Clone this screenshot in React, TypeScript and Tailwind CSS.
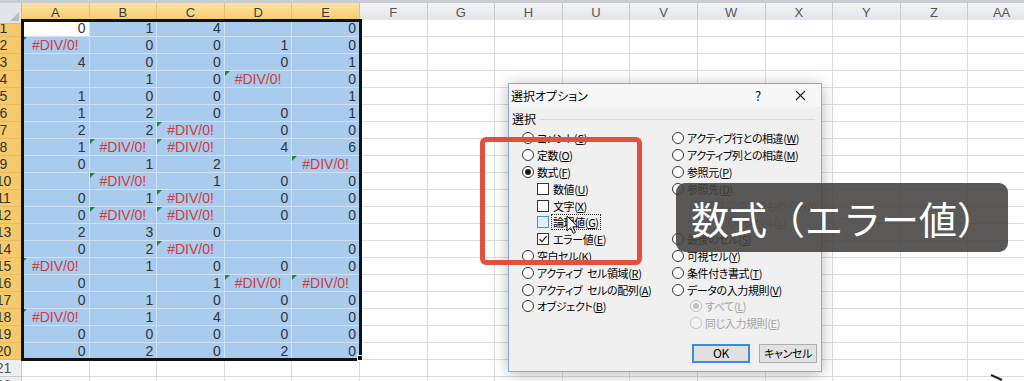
import clsx from "clsx";

const E = "#DIV/0!";
type V = number | string | null;

const DATA: V[][] = [
  [0, 1, 4, null, 0],
  [E, 0, 0, 1, 0],
  [4, 0, 0, 0, 1],
  [null, 1, 0, E, 0],
  [1, 0, 0, null, 1],
  [1, 2, 0, 0, 1],
  [2, 2, E, 0, 0],
  [1, E, E, 4, 6],
  [0, 1, 2, null, E],
  [null, E, 1, 0, 0],
  [0, 1, E, 0, 0],
  [0, E, E, 0, 0],
  [2, 3, 0, null, null],
  [0, 2, E, null, 0],
  [E, 1, 0, 0, 0],
  [0, null, 1, E, E],
  [0, 1, 0, 0, 0],
  [E, 1, 4, 0, 0],
  [0, 0, 0, 0, 0],
  [0, 2, 0, 2, 0],
];

const COLS = ["A", "B", "C", "D", "E", "F", "G", "H", "U", "V", "W", "X", "Y", "Z", "AA"];
const ROWS = Array.from({ length: 22 }, (_, i) => i + 1);

type Opt = {
  kind: "radio" | "check";
  text: string;
  checked?: boolean;
  disabled?: boolean;
  indent?: boolean;
  hover?: boolean;
  focus?: boolean;
};

const LEFT: Opt[] = [
  { kind: "radio", text: "コメント(C)" },
  { kind: "radio", text: "定数(O)" },
  { kind: "radio", text: "数式(F)", checked: true },
  { kind: "check", text: "数値(U)", indent: true },
  { kind: "check", text: "文字(X)", indent: true },
  { kind: "check", text: "論理値(G)", indent: true, hover: true, focus: true },
  { kind: "check", text: "エラー値(E)", indent: true, checked: true },
  { kind: "radio", text: "空白セル(K)" },
  { kind: "radio", text: "アクティブ セル領域(R)" },
  { kind: "radio", text: "アクティブ セルの配列(A)" },
  { kind: "radio", text: "オブジェクト(B)" },
];

const RIGHT: Opt[] = [
  { kind: "radio", text: "アクティブ行との相違(W)" },
  { kind: "radio", text: "アクティブ列との相違(M)" },
  { kind: "radio", text: "参照元(P)" },
  { kind: "radio", text: "参照先(D)" },
  { kind: "radio", text: "直接関係するもののみ(I)", indent: true, disabled: true, checked: true },
  { kind: "radio", text: "すべてのレベル(L)", indent: true, disabled: true },
  { kind: "radio", text: "最後のセル(S)" },
  { kind: "radio", text: "可視セル(Y)" },
  { kind: "radio", text: "条件付き書式(T)" },
  { kind: "radio", text: "データの入力規則(V)" },
  { kind: "radio", text: "すべて(L)", indent: true, disabled: true, checked: true },
  { kind: "radio", text: "同じ入力規則(E)", indent: true, disabled: true },
];

function Label({ text }: { text: string }) {
  const m = text.match(/^(.*)\((.)\)$/);
  if (!m) return <>{text}</>;
  const parts = m[1].split(" ");
  return (
    <>
      {parts.map((p, i) => (
        <span key={i} className={i > 0 ? "ml-[5px]" : ""}>
          {p}
        </span>
      ))}
      (<span className="underline underline-offset-[1px]">{m[2]}</span>)
    </>
  );
}

function Radio({ checked, disabled }: { checked?: boolean; disabled?: boolean }) {
  return (
    <span
      className={clsx(
        "w-[12px] h-[12px] rounded-full border flex items-center justify-center shrink-0",
        disabled ? "border-[#c2c2c2] bg-[#f4f4f4]" : "border-[#333] bg-white"
      )}
    >
      {checked && (
        <span className={clsx("w-[6px] h-[6px] rounded-full", disabled ? "bg-[#c2c2c2]" : "bg-[#1a1a1a]")} />
      )}
    </span>
  );
}

function Check({ checked, hover }: { checked?: boolean; hover?: boolean }) {
  return (
    <span
      className={clsx(
        "w-[12px] h-[12px] border flex items-center justify-center shrink-0",
        hover ? "border-[#4a90d0] bg-[#e3f0fc]" : "border-[#333] bg-white"
      )}
    >
      {checked && (
        <svg width="10" height="10" viewBox="0 0 10 10">
          <path d="M1.5 5.2 L4 7.6 L8.6 2.2" fill="none" stroke="#222" strokeWidth="1.3" />
        </svg>
      )}
    </span>
  );
}

function Option({ o }: { o: Opt }) {
  return (
    <div
      className={clsx(
        "h-[16.8px] flex items-center whitespace-nowrap",
        o.kind === "check" ? "gap-[4px]" : "gap-[3px]",
        o.indent && (o.kind === "check" ? "ml-[15px]" : "ml-[18px]"),
        o.disabled ? "text-[#a3a3a3]" : "text-black"
      )}
    >
      {o.kind === "radio" ? <Radio checked={o.checked} disabled={o.disabled} /> : <Check checked={o.checked} hover={o.hover} />}
      <span className={clsx("leading-[14px]", o.focus ? "border border-dotted border-[#333] px-[1px] -ml-[2px]" : "")}>
        <Label text={o.text} />
      </span>
    </div>
  );
}

function Cell({ v, sel, active }: { v: V; sel: boolean; active: boolean }) {
  const err = typeof v === "string";
  return (
    <div
      className={clsx(
        "relative h-[17px] border-r border-b flex items-center text-[14px] leading-none",
        sel ? "border-[#cfe1f4]" : "border-[#dadcde]",
        sel && !active ? "bg-[#a8cbee]" : "bg-white",
        err ? "justify-center text-[#cf3b3b]" : "justify-end pr-[3px] text-[#333]"
      )}
    >
      {err && (
        <span className="absolute left-0 top-0 w-0 h-0 border-t-[5px] border-t-[#1f8a3a] border-r-[5px] border-r-transparent" />
      )}
      {v}
    </div>
  );
}

export default function App() {
  return (
    <div className="relative w-[1024px] h-[381px] overflow-hidden bg-white font-['Liberation_Sans','Noto_Sans_CJK_JP',sans-serif]">
      {/* sheet */}
      <div className="h-[3px] bg-[#c9cdd2]" />
      <div className="grid grid-cols-[22px_repeat(15,67.6px)] h-[17px]">
        <div className="relative bg-[#e3e6e9] border-r border-b border-[#b9bec4]">
          <span className="absolute right-[2px] bottom-[2px] w-0 h-0 border-b-[9px] border-b-[#b7bcc2] border-l-[9px] border-l-transparent" />
        </div>
        {COLS.map((c, i) => (
          <div
            key={c}
            className={clsx(
              "flex items-center justify-center text-[13px] border-r border-b",
              i < 5
                ? "bg-gradient-to-b from-[#fbe3a3] to-[#f5c764] border-r-[#e9c06d] border-b-[#d9a545] text-[#3b3b3b]"
                : "bg-gradient-to-b from-[#f2f3f5] to-[#e1e4e8] border-r-[#c7cbd0] border-b-[#b9bec4] text-[#555]"
            )}
          >
            {c}
          </div>
        ))}
      </div>
      {ROWS.map((r) => {
        const inSel = r <= 20;
        return (
          <div key={r} className="grid grid-cols-[22px_repeat(15,67.6px)] h-[17px]">
            <div
              className={clsx(
                "overflow-hidden border-r border-b h-[17px]",
                inSel ? "bg-[#f6c96a] border-r-[#d9a545] border-b-[#e8bd62] text-[#333]" : "bg-[#eceef0] border-[#c7cbd0] text-[#555]"
              )}
            >
              <div className="w-[35px] -ml-[14px] h-full flex items-center justify-center text-[14px] leading-none">{r}</div>
            </div>
            {COLS.map((c, i) => {
              const sel = inSel && i < 5;
              const v = sel ? DATA[r - 1][i] : null;
              return <Cell key={c} v={v} sel={sel} active={r === 1 && i === 0} />;
            })}
          </div>
        );
      })}

      {/* selection outline */}
      <div className="absolute left-[21px] top-[19px] w-[341px] h-[342px] border-[3px] border-[#111] pointer-events-none" />
      <div className="absolute left-[357px] top-[355px] w-[6px] h-[6px] bg-[#111] border border-white" />

      {/* dialog */}
      <div className="absolute left-[508px] top-[83px] w-[314px] h-[289px] bg-[#f0f0f0] border border-[#86aad6] shadow-[0_2px_14px_rgba(0,0,0,0.28)] font-['Noto_Sans_CJK_JP',sans-serif] text-[11px] tracking-[-0.4px] text-black [font-feature-settings:'palt']">
        <div className="h-[23px] bg-[#f7f7f7] flex items-center pl-[2px] text-[12px] tracking-normal">
          <span>選択オプション</span>
          <span className="ml-auto w-[20px] text-center text-[13px]">?</span>
          <span className="ml-[17px] mr-[6px] w-[30px] flex items-center justify-center">
            <svg width="11" height="11" viewBox="0 0 11 11">
              <path d="M1 1 L10 10 M10 1 L1 10" stroke="#222" strokeWidth="1.1" />
            </svg>
          </span>
        </div>
        <div className="pt-[4px]">
          <div className="h-[16px] flex items-center pl-[3px] pr-[6px] text-[12px] tracking-normal">
            <span>選択</span>
            <span className="flex-1 h-px bg-[#d8d8d8] ml-[4px]" />
          </div>
          <div className="mt-[3px] grid grid-cols-[163px_1fr]">
            <div className="pl-[13px] flex flex-col">
              {LEFT.map((o) => (
                <Option key={o.text} o={o} />
              ))}
            </div>
            <div className="flex flex-col">
              {RIGHT.map((o) => (
                <Option key={o.text} o={o} />
              ))}
            </div>
          </div>
          <div className="mt-[12px] flex justify-end gap-[9px] pr-[4px]">
            <button className="w-[58px] h-[19px] bg-[#e1e1e1] border-2 border-[#3c8be0] text-[12px] flex items-center justify-center">
              OK
            </button>
            <button className="w-[58px] h-[19px] bg-[#e1e1e1] border border-[#adadad] text-[11px] flex items-center justify-center">
              キャンセル
            </button>
          </div>
        </div>
      </div>

      {/* red annotation */}
      <div className="absolute left-[480px] top-[137px] w-[162px] h-[128px] border-[5px] border-[#e2513d] rounded-[6px]" />

      {/* mouse cursor */}
      <svg className="absolute left-[566px] top-[215px]" width="13" height="20" viewBox="0 0 13 20">
        <path d="M1 1 L1 16 L4.6 12.6 L7.2 18.4 L9.4 17.4 L6.9 11.8 L11.6 11.8 Z" fill="#fff" stroke="#111" strokeWidth="1" strokeLinejoin="round" />
      </svg>

      {/* caption */}
      <div className="absolute left-[676px] top-[183px] w-[332px] h-[69px] rounded-[9px] bg-[rgba(68,66,64,0.88)] flex items-center pl-[15px] font-['Noto_Sans_CJK_JP',sans-serif] text-[38px] text-white leading-none">
        数式（エラー値）
      </div>

      {/* cursor tail bottom right */}
      <svg className="absolute left-[990px] top-[374px]" width="14" height="7" viewBox="0 0 14 7">
        <path d="M1 1 L12 6" stroke="#222" strokeWidth="2" />
      </svg>
    </div>
  );
}
